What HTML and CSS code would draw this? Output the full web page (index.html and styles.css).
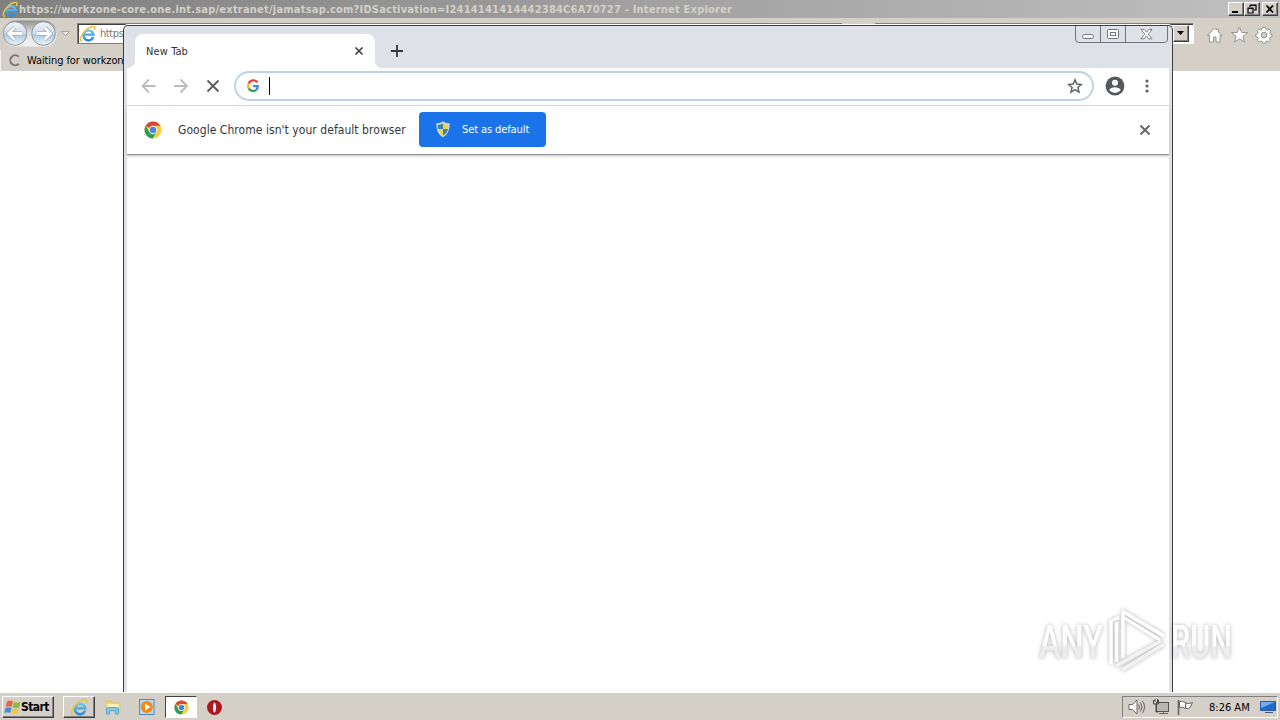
FILE: index.html
```html
<!DOCTYPE html>
<html lang="en">
<head>
<meta charset="utf-8">
<title>Desktop</title>
<link rel="stylesheet" href="styles.css">
</head>
<body>
<svg class="defs" width="0" height="0">
  <defs>
    <linearGradient id="ball" x1="0" y1="0" x2="0" y2="1"><stop offset="0" stop-color="#f3f6f9"/><stop offset=".5" stop-color="#cddbe8"/><stop offset=".55" stop-color="#afc9df"/><stop offset="1" stop-color="#e9f7fd"/></linearGradient>
    <linearGradient id="pill" x1="0" y1="0" x2="0" y2="1"><stop offset="0" stop-color="#908f8c"/><stop offset=".5" stop-color="#e4e3e0"/><stop offset="1" stop-color="#f4f3f1"/></linearGradient>
    <linearGradient id="ieblue" x1="0" y1="0" x2="0" y2="1"><stop offset="0" stop-color="#6cc5f2"/><stop offset="1" stop-color="#2b8bd6"/></linearGradient>
    <linearGradient id="wm" x1="0" y1="0" x2="0" y2="1"><stop offset=".55" stop-color="#fff"/><stop offset=".6" stop-color="#ececec"/></linearGradient>
    <symbol id="ie" viewBox="0 0 18 18">
      <path d="M14.300 12A5 5 0 1 1 14.500 9.600H6" fill="none" stroke="url(#ieblue)" stroke-width="2.400"/>
      <path d="M3.200 16.400C-.5 16 2 9.500 6.500 5.200 10.500 1.400 15.500.4 16 2.600c.2.900-.3 1.900-.8 2.700" fill="none" stroke="#e6c840" stroke-width="1.500"/>
    </symbol>
    <symbol id="chrome" viewBox="0 0 18 18">
      <circle cx="9" cy="9" r="8.500" fill="#fbcb3c"/>
      <path d="M9 9 1.600 4.800A8.500 8.500 0 0 1 16.400 4.800H9Z" fill="#d9453c"/>
      <path d="M1.600 4.800A8.500 8.500 0 0 0 8.600 17.500L12.600 11 9 9 5.400 11Z" fill="#2c9d57"/>
      <circle cx="9" cy="9" r="4.200" fill="#fff"/><circle cx="9" cy="9" r="3.300" fill="#4b83e4"/>
    </symbol>
  </defs>
</svg>
<div class="desktop">
  <div class="ie">
    <div class="ie-title">
      <svg width="17" height="17"><use href="#ie"/></svg>
      <span class="ie-title-text">https://workzone-core.one.int.sap/extranet/jamatsap.com?IDSactivation=I2414141414442384C6A70727 - Internet Explorer</span>
      <div class="ie-buttons">
        <span class="classic"><svg width="14" height="12"><path d="M3 9h6" stroke="#000" stroke-width="2"/></svg></span>
        <span class="classic"><svg width="14" height="12"><path d="M5 2h6v5H9M5 2v2M5 2.500h6M3 5h5v5H3zM3 5.500h5" fill="none" stroke="#000" stroke-width="1.200"/></svg></span>
        <span class="classic last"><svg width="14" height="12"><path d="M3.500 2.500 10 9.500M10 2.500 3.500 9.500" stroke="#000" stroke-width="1.800"/></svg></span>
      </div>
    </div>
    <div class="ie-nav">
      <svg class="ie-balls" width="76" height="32">
        <rect x="3" y="2.500" width="54" height="26" rx="13" fill="url(#pill)"/>
        <circle cx="15" cy="15.500" r="11.800" fill="url(#ball)" stroke="#8d959d"/>
        <circle cx="43.500" cy="15.500" r="11.800" fill="url(#ball)" stroke="#8d959d"/>
        <path d="M22 15.500H9M14.500 9.500 8.500 15.500l6 6M37 15.500h13M44.500 9.500l6 6-6 6" fill="none" stroke="#8aa2b6" stroke-width="4"/>
        <path d="M22 15.500H9M14.500 9.500 8.500 15.500l6 6M37 15.500h13M44.500 9.500l6 6-6 6" fill="none" stroke="#fff" stroke-width="2.800"/>
        <path d="M61.500 13.500h8l-4 4z" fill="#e7e4de" stroke="#aaa69f"/>
      </svg>
      <div class="ie-address">
        <svg width="18" height="18"><use href="#ie"/></svg>
        <span>https</span>
      </div>
      <div class="ie-search"><span class="drop"><svg width="14" height="14"><path d="M3 5h7L6.500 9z"/></svg></span></div>
      <svg class="ie-tools" width="72" height="24" fill="#fff" stroke="#97948e">
        <path d="M1.500 12.500 8.500 5l2 2V6h2v3l3.500 3.500h-2V19h-4v-5H7.500v5h-4v-6.500z"/>
        <path d="m33.500 4 2.100 5.400 5.900.3-4.600 3.600 1.600 5.700-5-3.200-5 3.200 1.600-5.700-4.600-3.600 5.900-.3z"/>
        <g transform="translate(58 12)"><path d="M-1.500-7.500h3l.5 2 1.500.6L5.200-6 7-3.900 5.900-2.200l.4 1.300 1.700.4v2l-1.900.6-.6 1.500L6.500 5.300 4.700 7 3 6l-1.300.6-.4 1.600h-2.500L-1.800 6.400-3.100 6-5 7-6.900 5.200-5.900 3.400l-.6-1.300-1.800-.5v-2.300l1.900-.5.6-1.500-1.100-1.600L-5.200-6l1.700 1 1.500-.6z"/><circle r="2.800" fill="#d4d0c8"/></g>
      </svg>
    </div>
    <div class="ie-tabs">
      <svg width="14" height="16"><path d="M10.800 3.700A5 5 0 1 0 10.800 10.800" fill="none" stroke="#777" stroke-width="2"/></svg>
      <span>Waiting for workzon</span>
    </div>
    <div class="ie-page"></div>
  </div>

  <div class="chrome">
    <div class="ghost"></div>
    <div class="tabstrip">
      <div class="tab">
        <span class="tab-title">New Tab</span>
        <svg width="10" height="10"><path d="M1.500 1.500l7 7M8.500 1.500l-7 7" stroke="#3c4043" stroke-width="1.700"/></svg>
      </div>
      <svg class="plus" width="14" height="14"><path d="M7 1v12M1 7h12" stroke="#34363a" stroke-width="1.800"/></svg>
      <svg class="win-buttons" width="93" height="18" fill="none" stroke="#70747b">
        <path d="M.5 0v13q0 3.500 3 3.500h86q3 0 3-3.500V0M25.500 0v16.500M50.500 0v16.500"/>
        <rect x="7.500" y="8.500" width="11" height="4" rx="2" fill="#fff"/>
        <rect x="32.500" y="3.500" width="11" height="9" rx="1" fill="#fff"/><rect x="35.500" y="6.500" width="5" height="3"/>
        <path d="M66 3.500h3.200l2.300 2.800 2.300-2.800H77l-3.800 4.700 3.800 4.600h-3.200l-2.300-2.800-2.300 2.800H66l3.800-4.600z" fill="#fff" stroke-width=".9"/>
      </svg>
    </div>
    <div class="toolbar">
      <svg class="nav-icons" width="82" height="18" fill="none" stroke-width="1.800">
        <path d="M15.500 9H2.500M9 2.500 2.500 9 9 15.500M34 9h13M40.500 2.500 47 9l-6.500 6.500" stroke="#b9bbbe"/>
        <path d="M67.500 3.500l11 11M78.500 3.500l-11 11" stroke="#5a5d61"/>
      </svg>
      <div class="omnibox">
        <svg width="14" height="14" viewBox="0 0 14 14" fill="none" stroke-width="2.300"><path d="M11.300 3.300A5 5 0 0 0 2.700 4.600" stroke="#e84335"/><path d="M2.700 4.600a5 5 0 0 0 0 4.800" stroke="#fabb05"/><path d="M2.700 9.400a5 5 0 0 0 7.500 1.500" stroke="#34a353"/><path d="M10.200 10.900A5 5 0 0 0 11.800 7.200H7" stroke="#4285f4"/></svg>
        <span class="caret"></span>
        <svg class="star" width="16" height="16"><path d="m8 1.800 1.800 4.300 4.600.4-3.500 3 1.100 4.600L8 11.700l-4 2.400 1.100-4.600-3.500-3 4.600-.4z" fill="none" stroke="#5f6368" stroke-width="1.500"/></svg>
      </div>
      <svg class="avatar" width="20" height="20"><circle cx="10" cy="10" r="9.400" fill="#55595e"/><circle cx="10" cy="6.800" r="3" fill="#fff"/><path d="M4.200 13.800c2-3.400 9.600-3.400 11.600 0a7 7 0 0 1-11.600 0z" fill="#fff"/></svg>
      <svg class="dots" width="4" height="16" fill="#5f6368"><circle cx="2" cy="3" r="1.600"/><circle cx="2" cy="8" r="1.600"/><circle cx="2" cy="13" r="1.600"/></svg>
    </div>
    <div class="infobar">
      <svg width="18" height="18"><use href="#chrome"/></svg>
      <span class="info-text">Google Chrome isn't your default browser</span>
      <button class="set-default">
        <svg width="14" height="16"><path d="M7 1q3 2 6 2c0 6-1 10-6 12.500C2 13 1 9 1 3q3 0 6-2z" fill="#f0d355" stroke="#c9dbe0" stroke-width="1.300"/><path d="M7 2.500V8H2Q1.800 6 1.800 4 5 3.800 7 2.500zM7 8h5q-.8 4.500-5 6.500z" fill="#3f82a8"/></svg>
        <span>Set as default</span>
      </button>
      <svg class="info-close" width="12" height="12"><path d="M1.500 1.500l9 9M10.500 1.500l-9 9" stroke="#66696d" stroke-width="2"/></svg>
    </div>
    <div class="page"></div>
  </div>

  <svg class="watermark" width="215" height="80">
    <g class="wm-shadow">
      <text class="wm-text" x="8" y="54" textLength="64" lengthAdjust="spacingAndGlyphs">ANY</text>
      <text class="wm-text" x="140" y="54" textLength="61" lengthAdjust="spacingAndGlyphs">RUN</text>
      <g fill="none" stroke="#fff" stroke-width="3.500" stroke-linejoin="round">
        <path d="M88 13.500 80 17V60"/>
        <path d="M85.500 58V18M92 54V7.500L133 32"/>
        <path d="M92 13 129 36" stroke-width="3"/>
        <path d="M130 37 85 62" stroke="#f2f2f2"/>
        <path d="M133 40 91 66" stroke="#f2f2f2"/>
      </g>
    </g>
  </svg>

  <div class="taskbar">
    <div class="start classic"><svg width="18" height="16"><path d="M3 2.500q3-2 6 0L7.700 8q-3-1.500-6 0z" fill="#e9653b"/><path d="M10 3q3 1.500 6.500 0L15 8.500q-3 1.500-6.200 0z" fill="#83bd42"/><path d="M1.500 9q3-1.500 6 0L6.200 14q-3-1.500-6 0z" fill="#3d91d1"/><path d="M8.500 9.500q3 1.500 6.200 0l-1.300 5q-3 1.500-6.200 0z" fill="#f3c63b"/></svg><span>Start</span></div>
    <div class="task raised"><svg width="19" height="19"><use href="#ie"/></svg></div>
    <div class="task"><svg width="18" height="18"><path d="M2 3h5l1 2h8v8H2z" fill="#ecd678" stroke="#dcc266"/><path d="M3 6h12v3H3z" fill="#fbf1b8"/><path d="M2.500 16V11q0-1.500 2-1.500h8q2 0 2 1.500v5h-3v-3.500h-6V16z" fill="#84c8e5" stroke="#5ba7ca"/></svg></div>
    <div class="task"><svg width="18" height="18"><rect x="1.500" y="1.500" width="14.500" height="15" fill="#b6d6ee" stroke="#4b8cc4"/><circle cx="8.800" cy="9" r="6" fill="#f28817"/><path d="M7 5.500 12.500 9 7 12.500z" fill="#fff"/></svg></div>
    <div class="task pressed"><svg width="15" height="15"><use href="#chrome"/></svg></div>
    <div class="task opera"><svg width="17" height="17"><circle cx="8.500" cy="8.500" r="7.500" fill="#b4141d"/><ellipse cx="8.500" cy="8.500" rx="2" ry="5.500" fill="#f5eeee" stroke="#7c080e" stroke-width=".8"/></svg></div>
    <div class="tray">
      <svg width="70" height="20" fill="none" stroke="#66645f">
        <path d="M3 7.500h3.500L11 3v14l-4.500-4.500H3z" fill="#fff"/><path d="M12.500 7.500q2 2.500 0 5M14.500 5.500q3 4.500 0 9M16.500 4q4 6 0 12"/>
        <rect x="30.500" y="5.500" width="12" height="9" fill="#b9b7b2" stroke="#55534f"/><path d="M33 16.500h9M37.500 14.500v2"/><path d="M27.500 3v4h5V3M29 2v3M31.500 2v3M30 7v8h2" stroke="#44423f"/>
        <path d="M52.500 3v15" stroke-width="1.600"/><path d="M53.500 4.500q3-1 6 1v6q-3-2-6-1zM59.500 6q3 1.500 7-.5l-2.500 5q-3 2-4.500.5z" fill="#fff"/>
      </svg>
      <span class="clock">8:26 AM</span>
      <svg width="16" height="16"><path d="M.5 2.500h15v9H.5z" fill="#2468c8" stroke="#2b5ca3"/><path d="M1 3h14l-14 6z" fill="#70adf0"/><path d="M5 13.500h8" stroke="#405978"/></svg>
    </div>
  </div>
</div>
</body>
</html>
```
FILE: styles.css
```css
* { box-sizing: border-box; }
body { margin: 0; font-family: "DejaVu Sans Condensed", "DejaVu Sans", sans-serif; font-stretch: condensed; font-size: 11px; color: #000; }
svg { display: block; flex: none; }
.defs { position: absolute; }
.desktop { position: relative; width: 1280px; height: 720px; overflow: hidden; background: #fff; display: flex; flex-direction: column; }
.ie { flex: 1; display: flex; flex-direction: column; min-height: 0; }
.ie-title { height: 18px; display: flex; align-items: center; background: linear-gradient(90deg, #808080, #c0c0c0); padding: 0 2px; color: #d4d0c8; }
.ie-title-text { font-weight: bold; font-size: 11px; white-space: nowrap; letter-spacing: .215px; }
.ie-buttons { margin-left: auto; display: flex; }
.classic { background: #d4d0c8; border: 1px solid; border-color: #fff #404040 #404040 #fff; box-shadow: inset -1px -1px #808080; display: flex; }
.ie-buttons .classic { width: 16px; height: 14px; }
.ie-buttons .last { margin-left: 2px; }
.ie-nav { height: 32px; display: flex; background: #d4d0c8; }
.ie-balls { margin-right: 1px; }
.ie-address { margin-top: 5px; width: 765px; height: 21px; background: #fff; border: 1px solid #808080; box-shadow: inset 1px 1px #404040; display: flex; align-items: center; padding-left: 1px; gap: 3px; color: #7a7a7a; }
.ie-address span { width: 23px; overflow: hidden; letter-spacing: -.4px; }
.ie-search { margin-top: 5px; margin-left: 33px; width: 319px; height: 21px; background: #fff; border: 1px solid #808080; border-right-color: #fff; border-bottom-color: #fff; box-shadow: inset 0 1px #404040; display: flex; justify-content: flex-end; padding: 1px 4px 1px 0; }
.drop { width: 16px; height: 17px; background: #d4d0c8; border: 1px solid; border-color: #fff #404040 #404040 #fff; box-shadow: inset -1px -1px #808080; }
.ie-tools { margin: 5px 0 0 12px; }
.ie-tabs { height: 21px; display: flex; align-items: center; gap: 5px; background: #d4d0c8; border-left: 1px solid #f4f2ee; padding-left: 7px; }
.ie-tabs span { white-space: nowrap; letter-spacing: -.1px; }
.ie-page { flex: 1; background: #fff; }

.chrome { position: absolute; left: 123px; top: 25px; width: 1050px; height: 667px; border: 1px solid #3b3c3e; border-bottom: 0; border-radius: 5px 5px 0 0; background: #dee1e6; padding: 0 3px; display: flex; flex-direction: column; overflow: hidden; box-shadow: 0 -1px #fff; }
.tabstrip { height: 42px; flex: none; background: #dee1e8; display: flex; padding-left: 8px; align-items: flex-start; }
.ghost { position: absolute; left: 718px; top: -1px; width: 32px; height: 2px; background: #e8e9ea; }
.tab { margin-top: 8px; width: 240px; height: 34px; background: #fff; border-radius: 8px 8px 0 0; display: flex; align-items: center; justify-content: space-between; padding: 0 11px; position: relative; color: #303236; }
.tab-title { letter-spacing: .1px; }
.tab::before, .tab::after { content: ""; position: absolute; bottom: 0; width: 8px; height: 8px; }
.tab::before { left: -8px; background: radial-gradient(circle at 0 0, transparent 8px, #fff 8.5px); }
.tab::after { right: -8px; background: radial-gradient(circle at 100% 0, transparent 8px, #fff 8.5px); }
.plus { margin: 18px 0 0 15px; }
.win-buttons { margin-left: auto; margin-right: 1px; }
.toolbar { height: 38px; flex: none; background: #fff; border-bottom: 1px solid #dadce0; display: flex; align-items: center; padding: 0 17px 2px 13px; }
.omnibox { margin-left: 12px; width: 860px; height: 30px; border: 2px solid #bfd1e9; border-radius: 15px; display: flex; align-items: center; padding: 0 9px 0 10px; }
.caret { width: 1px; height: 18px; background: #000; margin-left: 9px; }
.star { margin-left: auto; }
.avatar { margin-left: 11px; }
.dots { margin-left: auto; margin-right: 3px; }
.infobar { height: 49px; flex: none; background: #fff; border-bottom: 1px solid #939393; display: flex; align-items: center; padding: 0 18px 0 17px; box-shadow: 0 1px 3px #bbb; position: relative; }
.info-text { margin-left: 16px; width: 241px; font-size: 12px; color: #35373a; white-space: nowrap; letter-spacing: .05px; }
.set-default { width: 127px; height: 35px; margin-bottom: 2px; border: 0; border-radius: 4px; background: #1a73e8; color: #fff; font: inherit; display: flex; align-items: center; padding: 0 0 0 17px; gap: 12px; white-space: nowrap; letter-spacing: -.1px; }
.info-close { margin-left: auto; }
.page { flex: 1; background: #fff; }
.watermark { position: absolute; left: 1031px; top: 604px; }
.wm-shadow { filter: drop-shadow(0 0 2px rgba(0,0,0,.3)); }
.wm-text { font: 500 46px Roboto, sans-serif; fill: url(#wm); }

.taskbar { position: relative; height: 28px; background: #d4d0c8; border-top: 1px solid #fff; display: flex; align-items: flex-start; padding: 3px 2px 0; }
.start { width: 52px; height: 22px; align-items: center; font-weight: bold; font-size: 12px; padding-left: 1px; margin-right: 9px; letter-spacing: -.6px; }
.start span { margin-left: -1px; }
.task { width: 32px; height: 22px; margin-right: 2px; display: flex; align-items: center; justify-content: center; }
.raised { border: 1px solid; border-color: #fff #404040 #404040 #fff; box-shadow: inset -1px -1px #808080; }
.pressed { background: #fff; border: 1px solid; border-color: #404040 #fff #fff #404040; }
.opera { margin-left: -1px; }
.tray { margin-left: auto; width: 156px; height: 22px; border: 1px solid; border-color: #808080 #fff #fff #808080; display: flex; align-items: center; padding: 0 1px 0 3px; }
.clock { margin-left: 13px; flex: 1; white-space: nowrap; }
```
